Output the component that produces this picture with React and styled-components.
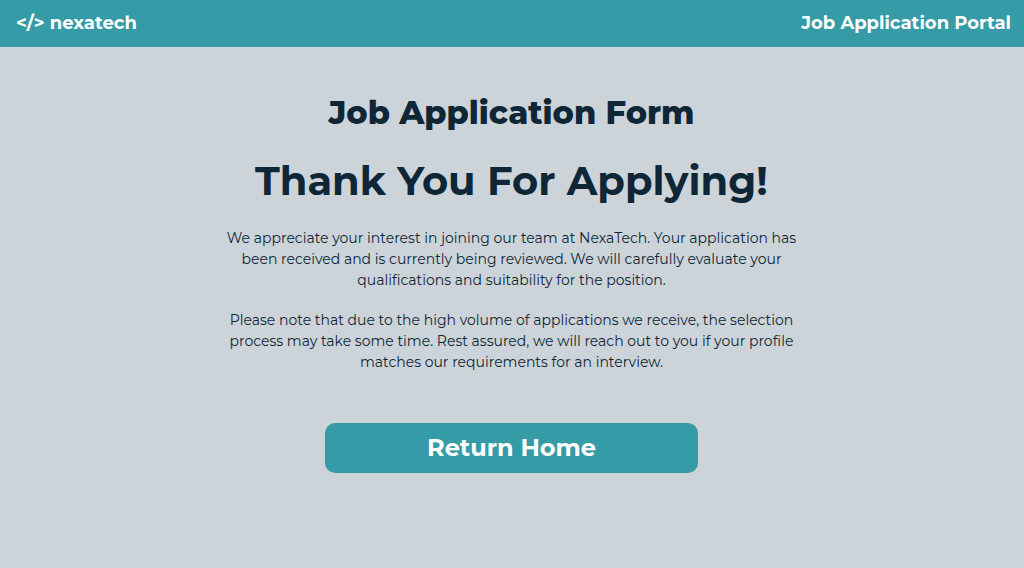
import React from "react";
import styled, { createGlobalStyle } from "styled-components";

const GlobalStyle = createGlobalStyle`
  *, *::before, *::after { box-sizing: border-box; }
  body {
    margin: 0;
    background: #ccd4da;
    color: #0e2635;
    font-family: Montserrat, Inter, "Open Sans", sans-serif;
    font-variant-ligatures: none;
  }
`;

const Header = styled.header`
  display: flex;
  align-items: center;
  justify-content: space-between;
  padding: 11px 13px 12px 16px;
  background: #359ba6;
  color: #fff;
  font-size: 18px;
  line-height: 24px;
  font-weight: 700;
`;

const Brand = styled.a`
  color: inherit;
  text-decoration: none;
`;

const Main = styled.main`
  display: flex;
  flex-direction: column;
  align-items: center;
  padding: 44px 25px 48px 24px;
  text-align: center;
`;

const FormTitle = styled.h1`
  margin: 0;
  font-size: 32px;
  line-height: 44px;
  font-weight: 800;
`;

const Heading = styled.h2`
  margin: 20px 0 0;
  font-size: 40px;
  line-height: 52px;
  font-weight: 700;
`;

const Message = styled.div`
  display: grid;
  gap: 19px;
  margin-top: 21px;
  max-width: 580px;
`;

const Paragraph = styled.p`
  margin: 0;
  font-size: 14px;
  line-height: 21px;
`;

const HomeButton = styled.button`
  width: 100%;
  max-width: 373px;
  margin-top: 50px;
  padding: 9px 24px;
  border: 0;
  border-radius: 10px;
  background: #359ba6;
  color: #fff;
  font-family: inherit;
  font-size: 24px;
  line-height: 32px;
  font-weight: 700;
  cursor: pointer;
`;

export default function App() {
  return (
    <>
      <GlobalStyle />
      <Header>
        <Brand href="#">&lt;/&gt; nexatech</Brand>
        <span>Job Application Portal</span>
      </Header>
      <Main>
        <FormTitle>Job Application Form</FormTitle>
        <Heading>Thank You For Applying!</Heading>
        <Message>
          <Paragraph>
            We appreciate your interest in joining our team at NexaTech. Your application has
            been received and is currently being reviewed. We will carefully evaluate your
            qualifications and suitability for the position.
          </Paragraph>
          <Paragraph>
            Please note that due to the high volume of applications we receive, the selection
            process may take some time. Rest assured, we will reach out to you if your profile
            matches our requirements for an interview.
          </Paragraph>
        </Message>
        <HomeButton type="button">Return Home</HomeButton>
      </Main>
    </>
  );
}
